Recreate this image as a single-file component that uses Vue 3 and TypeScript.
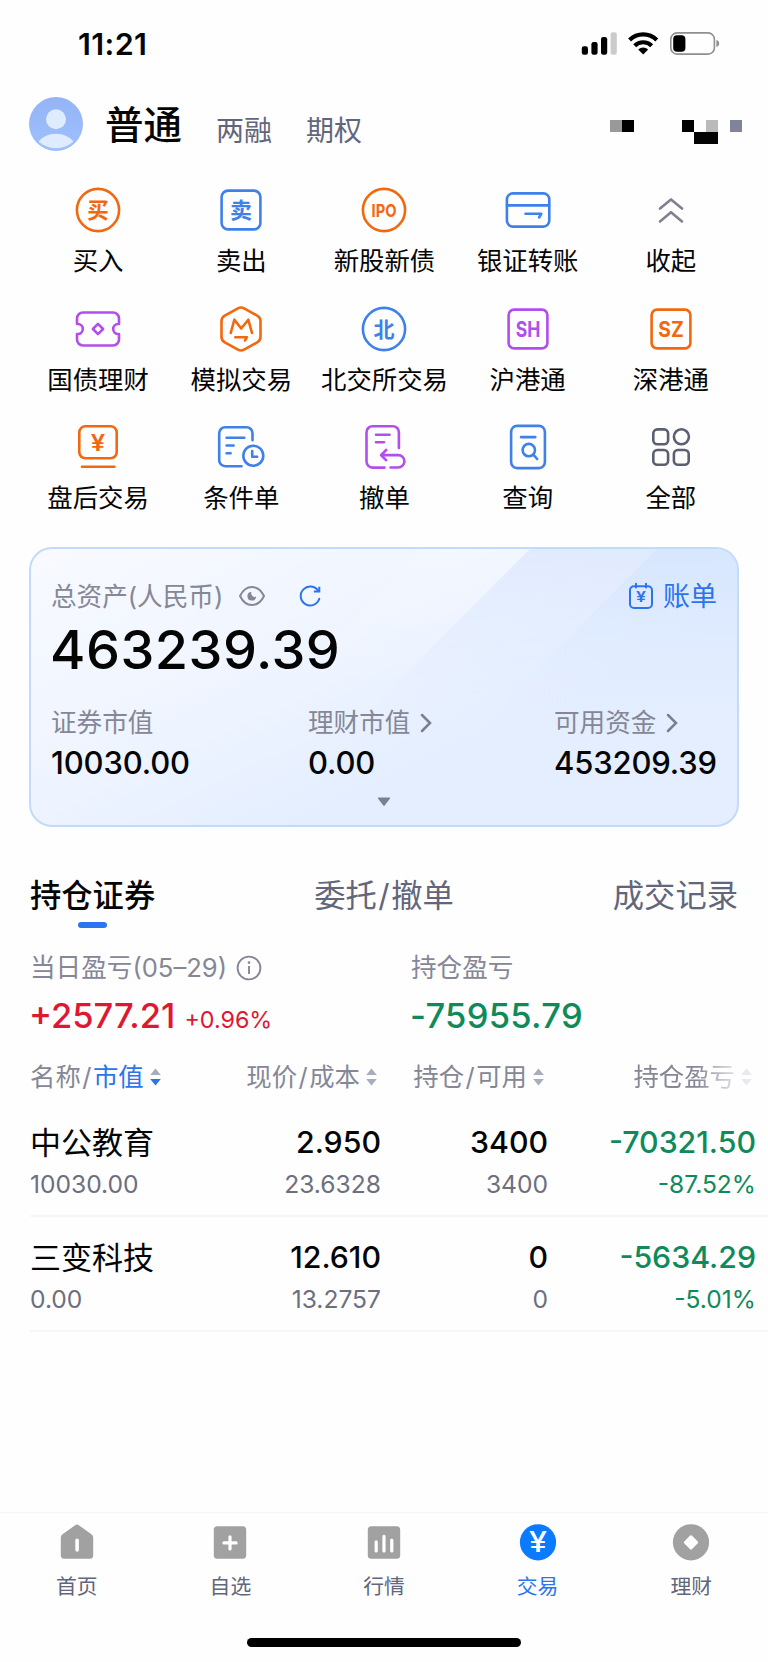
<script setup lang="ts">
type Tone = 'orange' | 'blue' | 'purple' | 'gray' | 'dark'

interface Entry {
  id: string
  label: string
  tone: Tone
}

interface Holding {
  name: string
  value: string
  price: string
  cost: string
  held: string
  available: string
  profit: string
  rate: string
}

const entries: Entry[] = [
  { id: 'buy', label: '买入', tone: 'orange' },
  { id: 'sell', label: '卖出', tone: 'blue' },
  { id: 'ipo', label: '新股新债', tone: 'orange' },
  { id: 'bank', label: '银证转账', tone: 'blue' },
  { id: 'fold', label: '收起', tone: 'gray' },
  { id: 'bond', label: '国债理财', tone: 'purple' },
  { id: 'mock', label: '模拟交易', tone: 'orange' },
  { id: 'north', label: '北交所交易', tone: 'blue' },
  { id: 'sh', label: '沪港通', tone: 'purple' },
  { id: 'sz', label: '深港通', tone: 'orange' },
  { id: 'after', label: '盘后交易', tone: 'orange' },
  { id: 'condition', label: '条件单', tone: 'blue' },
  { id: 'cancel', label: '撤单', tone: 'purple' },
  { id: 'query', label: '查询', tone: 'blue' },
  { id: 'all', label: '全部', tone: 'dark' },
]

const holdings: Holding[] = [
  { name: '中公教育', value: '10030.00', price: '2.950', cost: '23.6328', held: '3400', available: '3400', profit: '-70321.50', rate: '-87.52%' },
  { name: '三变科技', value: '0.00', price: '12.610', cost: '13.2757', held: '0', available: '0', profit: '-5634.29', rate: '-5.01%' },
]

const navItems = [
  { id: 'home', label: '首页' },
  { id: 'watch', label: '自选' },
  { id: 'market', label: '行情' },
  { id: 'trade', label: '交易' },
  { id: 'wealth', label: '理财' },
]
</script>

<template>
  <div class="screen">
    <div class="status">
      <span class="clock">11:21</span>
      <svg class="status-icons" width="140" height="26" viewBox="0 0 140 26">
        <rect x="1.8" y="16.2" width="6.2" height="8.6" rx="2.2" />
        <rect x="11.4" y="12" width="6.2" height="12.8" rx="2.2" />
        <rect x="21" y="7" width="6.2" height="17.8" rx="2.2" />
        <rect x="30.6" y="2.2" width="6.2" height="22.6" rx="2.2" fill="#cbcbcb" />
        <g fill="none" stroke="#000" stroke-width="4.2">
          <path d="M49.6 9.9a19.4 19.4 0 0 1 27.2 0" />
          <path d="M54.7 15.7a12.2 12.2 0 0 1 17 0" />
        </g>
        <path d="M63.2 24.6l-5-5.1a7.2 7.2 0 0 1 10 0z" />
        <rect x="90.8" y="2.9" width="43.6" height="21.2" rx="6.4" fill="none" stroke="#8f8f8f" stroke-width="1.6" />
        <rect x="93.2" y="5.3" width="12.2" height="16.4" rx="3.8" />
        <path d="M136.4 10v7a3.6 3.6 0 0 0 0-7z" fill="#8f8f8f" />
      </svg>
    </div>

    <header class="top">
      <svg class="avatar" width="54" height="54" viewBox="0 0 54 54">
        <defs>
          <linearGradient id="avatar-fill" x1="0" y1="0" x2="0" y2="1">
            <stop offset="0" stop-color="#94b4f6" />
            <stop offset="1" stop-color="#9fc0fd" />
          </linearGradient>
        </defs>
        <circle cx="27" cy="27" r="27" fill="url(#avatar-fill)" />
        <circle cx="27" cy="22.3" r="10" fill="#dfebff" />
        <path d="M9.6 44.6C13.6 39.8 20 36.8 27 36.8s13.4 3 17.4 7.8C39.5 49 33.5 51.2 27 51.2S14.5 49 9.6 44.6z" fill="#dfebff" />
      </svg>
      <span class="account active">普通</span>
      <span class="account second">两融</span>
      <span class="account third">期权</span>
      <svg class="mosaic" width="132" height="24" viewBox="0 0 132 24" shape-rendering="crispEdges">
        <rect x="0" y="0" width="12" height="12" fill="#999" />
        <rect x="12" y="0" width="12" height="12" />
        <rect x="72" y="0" width="12" height="12" />
        <rect x="96" y="0" width="12" height="12" fill="#bababa" />
        <rect x="120" y="0" width="12" height="12" fill="#80839a" />
        <rect x="84" y="12" width="24" height="12" fill="#040404" />
      </svg>
    </header>

    <nav class="entries">
      <div v-for="e in entries" :key="e.id" class="entry">
        <svg class="glyph" :class="e.tone" width="48" height="48" viewBox="0 0 48 48">
          <template v-if="e.id === 'buy'">
            <circle cx="24" cy="24" r="21.1" />
            <text x="24" y="32" font-size="21.5">买</text>
          </template>
          <template v-else-if="e.id === 'sell'">
            <rect x="4.6" y="4.6" width="38.8" height="38.8" rx="6.5" />
            <text x="24" y="32.2" font-size="22">卖</text>
          </template>
          <template v-else-if="e.id === 'ipo'">
            <circle cx="24" cy="24" r="21.1" />
            <text class="latin" x="11.6" y="30.6" font-size="18" textLength="25" lengthAdjust="spacingAndGlyphs">IPO</text>
          </template>
          <template v-else-if="e.id === 'bank'">
            <rect x="2.9" y="7.4" width="42.4" height="33.2" rx="6" />
            <path d="M3 19.4H45M21.5 27.7H37.3L35.2 31.4" />
          </template>
          <template v-else-if="e.id === 'fold'">
            <path d="M13 22.6L24 13.4L35 22.6M13 35.4L24 26.2L35 35.4" />
          </template>
          <template v-else-if="e.id === 'bond'">
            <path d="M9 7.5H39a6 6 0 0 1 6 6V19h-.8a5 5 0 0 0 0 10h.8V34.5a6 6 0 0 1-6 6H9a6 6 0 0 1-6-6V29h.8a5 5 0 0 0 0-10H3V13.5a6 6 0 0 1 6-6z" />
            <path d="M24 18.9L29.1 24L24 29.1L18.9 24z" />
          </template>
          <template v-else-if="e.id === 'mock'">
            <path d="M20.9 3.4Q24 1.7 27.1 3.4L40.2 10.6Q43.5 12.5 43.5 16V32Q43.5 35.5 40.2 37.4L27.1 44.6Q24 46.3 20.9 44.6L7.8 37.4Q4.5 35.5 4.5 32V16Q4.5 12.5 7.8 10.6z" />
            <path d="M13.7 28L17.4 14.7L24.2 23.5L31.3 14.7L35 28M18.3 32.2H30L28 35.5" />
          </template>
          <template v-else-if="e.id === 'north'">
            <circle cx="24" cy="24" r="21.1" />
            <text x="24" y="31.5" font-size="21">北</text>
          </template>
          <template v-else-if="e.id === 'sh'">
            <rect x="4.6" y="4.6" width="38.8" height="38.8" rx="5.5" />
            <text class="latin" x="11.8" y="31.5" font-size="21" textLength="24.6" lengthAdjust="spacingAndGlyphs">SH</text>
          </template>
          <template v-else-if="e.id === 'sz'">
            <rect x="4.6" y="4.6" width="38.8" height="38.8" rx="5.5" />
            <text class="latin" x="11.3" y="31.5" font-size="21" textLength="25.4" lengthAdjust="spacingAndGlyphs">SZ</text>
          </template>
          <template v-else-if="e.id === 'after'">
            <rect x="5.3" y="3.3" width="37.4" height="32" rx="6" />
            <path d="M8 43.7H40.4" />
            <text class="latin yuan" x="16.8" y="27.5" font-size="23" textLength="14.4" lengthAdjust="spacingAndGlyphs">¥</text>
          </template>
          <template v-else-if="e.id === 'condition'">
            <path d="M24.5 43.2H8.2a6 6 0 0 1-6-6V10.2a6 6 0 0 1 6-6H29.5a6 6 0 0 1 6 6V17.3" />
            <path d="M9.6 14.7H27.3M9.6 22.5h7M9.6 30.3h4M35.2 28v5.8h5" />
            <circle cx="36.3" cy="32.7" r="10" />
          </template>
          <template v-else-if="e.id === 'cancel'">
            <path d="M24.5 44.6H12.5a6 6 0 0 1-6-6V9.2a6 6 0 0 1 6-6H32.9a6 6 0 0 1 6 6V25" />
            <path d="M16 11.7H29.5M16 19.3H24M26.2 27L21 32.1L26.2 37.2M21.3 32.1H38.2a6.2 6.2 0 0 1 0 12.4H30.5" />
          </template>
          <template v-else-if="e.id === 'query'">
            <rect x="7.1" y="2.9" width="33.8" height="42.2" rx="6" />
            <path d="M17 14.1H31.3M29.3 31.6L33.2 36" />
            <circle cx="24.8" cy="27.1" r="6.2" />
          </template>
          <template v-else>
            <rect x="6.3" y="6.4" width="14.8" height="14.8" rx="4" />
            <circle cx="34.4" cy="13.8" r="7.5" />
            <rect x="6.3" y="27" width="14.8" height="14.8" rx="4" />
            <rect x="26.9" y="27" width="14.8" height="14.8" rx="4" />
          </template>
        </svg>
        <span class="entry-label">{{ e.label }}</span>
      </div>
    </nav>

    <section class="card">
      <svg class="card-bands" width="710" height="280" viewBox="0 0 710 280">
        <defs>
          <linearGradient id="band-a" x1="0" y1="0" x2="0" y2="1">
            <stop offset="0" stop-color="#fff" stop-opacity=".2" />
            <stop offset="1" stop-color="#fff" stop-opacity="0" />
          </linearGradient>
          <linearGradient id="band-b" x1="0" y1="0" x2="0" y2="1">
            <stop offset="0" stop-color="#dde8fd" stop-opacity=".8" />
            <stop offset="1" stop-color="#e0ebff" stop-opacity="0" />
          </linearGradient>
          <linearGradient id="band-c" x1="0" y1="0" x2="0" y2="1">
            <stop offset="0" stop-color="#d2e5fe" stop-opacity=".7" />
            <stop offset="1" stop-color="#e0ebff" stop-opacity="0" />
          </linearGradient>
        </defs>
        <path d="M395 0H503L353 150H245z" fill="url(#band-a)" />
        <path d="M503 0H710V170H333z" fill="url(#band-b)" />
        <path d="M630 0H710V180H450z" fill="url(#band-c)" />
      </svg>
      <div class="asset-head">
        <span class="muted">总资产(人民币)</span>
        <svg class="eye" width="28" height="22" viewBox="0 0 28 22" fill="none">
          <path d="M2 11C4.8 5.2 9.2 2 14 2s9.2 3.2 12 9c-2.8 5.8-7.2 9-12 9S4.8 16.8 2 11z" stroke="#858796" stroke-width="2" stroke-linejoin="round" />
          <path d="M13.5 6.7a4.4 4.4 0 1 0 4.7 4.9a3.7 3.7 0 0 1-4.7-4.9z" fill="#858796" />
        </svg>
        <svg class="refresh" width="24" height="24" viewBox="0 0 24 24" fill="none" stroke="#2b74ee" stroke-width="2">
          <path d="M21.3 14.8A9.5 9.5 0 1 1 20.3 7" stroke-linecap="round" />
          <path d="M21.3 2.8V7.6H15.8" />
        </svg>
        <span class="bill">
          <svg width="26" height="28" viewBox="0 0 26 28" fill="none" stroke="#2b74ee" stroke-width="2" stroke-linecap="round">
            <rect x="2" y="4.3" width="22" height="21.7" rx="4" />
            <path d="M8 1.8V5.5M18 1.8V5.5" />
            <text class="yen" x="8" y="20.3" textLength="10" lengthAdjust="spacingAndGlyphs">¥</text>
          </svg>
          账单
        </span>
      </div>
      <div class="total">463239.39</div>
      <div class="asset-cols">
        <div class="asset-col first">
          <span class="muted">证券市值</span>
          <b>10030.00</b>
        </div>
        <div class="asset-col middle">
          <span class="muted">理财市值<svg class="chev" width="12" height="20" viewBox="0 0 12 20"><path d="M2 2L10 10L2 18" /></svg></span>
          <b>0.00</b>
        </div>
        <div class="asset-col">
          <span class="muted">可用资金<svg class="chev" width="12" height="20" viewBox="0 0 12 20"><path d="M2 2L10 10L2 18" /></svg></span>
          <b>453209.39</b>
        </div>
      </div>
      <svg class="expand" width="14" height="10" viewBox="0 0 14 10"><path d="M1.3 .6H12.7Q13.5 .8 13 1.6L7.7 8.6Q7 9.3 6.3 8.6L1 1.6Q.5 .8 1.3 .6z" fill="#7c7f8f" /></svg>
    </section>

    <div class="tabs">
      <span class="tab on">持仓证券</span>
      <span class="tab">委托<i class="slash">/</i>撤单</span>
      <span class="tab">成交记录</span>
    </div>

    <section class="summary">
      <div class="sum-col">
        <span class="muted day">当日盈亏(05–29)<svg width="26" height="26" viewBox="0 0 26 26" fill="none" stroke="#858796" stroke-width="1.9"><circle cx="13" cy="13" r="11.4" /><path d="M13 11V19" /><circle cx="13" cy="7.6" r="1.3" fill="#858796" stroke="none" /></svg></span>
        <div class="sum-value up">+2577.21<small>+0.96%</small></div>
      </div>
      <div class="sum-col">
        <span class="muted">持仓盈亏</span>
        <div class="sum-value down total-loss">-75955.79</div>
      </div>
    </section>

    <div class="table">
      <div class="row head">
        <span class="cell left">名称<i class="slash">/</i><i class="picked">市值</i><svg class="sort picked-sort" width="11" height="18" viewBox="0 0 11 18"><path class="up-arrow" d="M5.5 .5L10.8 7H.2z" /><path class="down-arrow" d="M5.5 17.5L10.8 11H.2z" /></svg></span>
        <span class="cell">现价<i class="slash">/</i>成本<svg class="sort" width="11" height="18" viewBox="0 0 11 18"><path class="up-arrow" d="M5.5 .5L10.8 7H.2z" /><path class="down-arrow" d="M5.5 17.5L10.8 11H.2z" /></svg></span>
        <span class="cell">持仓<i class="slash">/</i>可用<svg class="sort" width="11" height="18" viewBox="0 0 11 18"><path class="up-arrow" d="M5.5 .5L10.8 7H.2z" /><path class="down-arrow" d="M5.5 17.5L10.8 11H.2z" /></svg></span>
        <span class="cell faded">持仓盈亏<svg class="sort" width="11" height="18" viewBox="0 0 11 18"><path class="up-arrow" d="M5.5 .5L10.8 7H.2z" /><path class="down-arrow" d="M5.5 17.5L10.8 11H.2z" /></svg></span>
      </div>
      <div v-for="h in holdings" :key="h.name" class="row holding">
        <div class="pair left"><span class="name">{{ h.name }}</span><span class="sub">{{ h.value }}</span></div>
        <div class="pair"><span class="main">{{ h.price }}</span><span class="sub">{{ h.cost }}</span></div>
        <div class="pair"><span class="main">{{ h.held }}</span><span class="sub">{{ h.available }}</span></div>
        <div class="pair down"><span class="main">{{ h.profit }}</span><span class="sub">{{ h.rate }}</span></div>
      </div>
    </div>

    <footer class="bottom">
      <div class="nav">
        <div v-for="n in navItems" :key="n.id" class="nav-item" :class="{ current: n.id === 'trade' }">
          <svg width="38" height="38" viewBox="0 0 38 38" fill="#a1a1a1">
            <template v-if="n.id === 'home'">
              <path d="M17.5 2Q19 .8 20.5 2L33.5 11.2Q35.2 12.5 35.2 14.5V32.2a3.5 3.5 0 0 1-3.5 3.5H6.3a3.5 3.5 0 0 1-3.5-3.5V14.5Q2.8 12.5 4.5 11.2z" />
              <rect x="17.3" y="15.5" width="3.6" height="13.3" rx="1.8" fill="#fff" />
            </template>
            <template v-else-if="n.id === 'watch'">
              <rect x="2.8" y="3.3" width="32.4" height="32.4" rx="3.5" />
              <path d="M19 13.8V26M12.9 19.9H25.1" stroke="#fff" stroke-width="3.2" stroke-linecap="round" />
            </template>
            <template v-else-if="n.id === 'market'">
              <rect x="2.8" y="3.3" width="32.4" height="32.4" rx="3.5" />
              <path d="M11.2 18.8V28M19 13.3V28M26.8 17V28" stroke="#fff" stroke-width="3.2" stroke-linecap="round" />
            </template>
            <template v-else-if="n.id === 'trade'">
              <circle cx="19" cy="19.3" r="18.1" fill="#0a7aff" />
              <text class="nav-yen" x="10" y="29.3" textLength="18" lengthAdjust="spacingAndGlyphs">¥</text>
            </template>
            <template v-else>
              <circle cx="19" cy="19.3" r="18.1" />
              <path d="M19 13.5L24.9 19.4L19 25.3L13.1 19.4z" fill="#fff" stroke="#fff" stroke-width="2.5" stroke-linejoin="round" />
            </template>
          </svg>
          <span>{{ n.label }}</span>
        </div>
      </div>
      <div class="home-bar"></div>
    </footer>
  </div>
</template>

<style>
body {
  margin: 0;
  background: #fefefe;
}
</style>

<style scoped>
.screen {
  width: 768px;
  height: 1662px;
  overflow: hidden;
  display: flex;
  flex-direction: column;
  background: #fefefe;
  color: #050505;
  font-family: Inter, "Noto Sans CJK SC", sans-serif;
  font-size: 25.4px;
}

svg {
  display: block;
  flex: none;
}

.status {
  height: 88px;
  flex: none;
  display: flex;
  justify-content: space-between;
  padding: 0 48px 0 78px;
  box-sizing: border-box;
}

.clock {
  line-height: 88px;
  font-size: 30.5px;
  font-weight: 600;
  letter-spacing: .4px;
}

.status-icons {
  margin-top: 30px;
}

.top {
  height: 72px;
  flex: none;
  display: flex;
  align-items: center;
  padding-left: 29px;
}

.account {
  white-space: nowrap;
  line-height: 40px;
}

.account.active {
  margin: 2px 0 0 22px;
  font-size: 38.5px;
  font-weight: 500;
}

.account.second,
.account.third {
  margin: 14px 0 0 34px;
  font-size: 28px;
  color: #62667a;
}

.mosaic {
  margin: 15px 26px 0 auto;
}

.entries {
  height: 387px;
  flex: none;
  box-sizing: border-box;
  display: grid;
  grid-template-columns: repeat(5, 143.2px);
  grid-auto-rows: 118.5px;
  padding: 26px 0 0 26.5px;
}

.entry {
  display: flex;
  flex-direction: column;
  align-items: center;
}

.entry-label {
  margin-top: 7px;
  line-height: 40px;
  white-space: nowrap;
}

.glyph {
  fill: none;
  stroke: currentColor;
  stroke-width: 2.6;
  stroke-linecap: round;
  stroke-linejoin: round;
}

.glyph text {
  fill: currentColor;
  stroke: none;
  font-weight: 700;
  text-anchor: middle;
}

.glyph text.latin {
  font-family: Inter, sans-serif;
  font-weight: 700;
  text-anchor: start;
}

.glyph text.yuan {
  font-weight: 600;
}

.orange { color: #f2680f; }
.blue { color: #3f80ea; }
.purple { color: #b14eed; }
.gray { color: #7f8191; }
.dark { color: #5b5f72; }

.card {
  position: relative;
  width: 710px;
  height: 280px;
  flex: none;
  margin-left: 29px;
  box-sizing: border-box;
  border: 2px solid #c2dafc;
  border-radius: 23px;
  overflow: hidden;
  background: linear-gradient(155deg, #f8faff 0%, #eef4ff 42%, #e4eeff 66%, #e4eeff 100%);
  padding: 25px 20px 0;
}

.card-bands {
  position: absolute;
  left: -2px;
  top: -2px;
}

.asset-head {
  position: relative;
  display: flex;
  align-items: center;
  height: 46px;
}

.muted {
  color: #858796;
  white-space: nowrap;
  font-size: 25.6px;
  line-height: 40px;
}

.asset-head .muted {
  margin-top: -1px;
}

.asset-head svg {
  margin-top: -2px;
}

.eye {
  margin-left: 15px;
}

.refresh {
  margin-left: 32px;
}

.bill {
  margin-left: auto;
  display: flex;
  align-items: center;
  gap: 9px;
  font-size: 27px;
  line-height: 40px;
  color: #2b74ee;
}

.yen {
  font-family: Inter, sans-serif;
  font-size: 15px;
  font-weight: 600;
  fill: #2b74ee;
  stroke: none;
}

.total {
  position: relative;
  height: 60px;
  line-height: 60px;
  font-size: 54px;
  font-weight: 500;
  letter-spacing: .5px;
  margin-left: -1px;
}

.asset-cols {
  position: relative;
  margin-top: 23px;
  display: flex;
}

.asset-col {
  display: flex;
  flex-direction: column;
}

.asset-col.first { width: 257px; }
.asset-col.middle { width: 246px; }

.asset-col .muted {
  display: flex;
  align-items: center;
  height: 40px;
}

.asset-col b {
  line-height: 40px;
  font-size: 31px;
  font-weight: 500;
  letter-spacing: -.15px;
}

.chev {
  margin-left: 10px;
  fill: none;
  stroke: #7c7f8f;
  stroke-width: 2.5;
  stroke-linecap: round;
}

.expand {
  position: relative;
  margin: 14px auto 0;
}

.tabs {
  height: 101px;
  flex: none;
  display: flex;
  justify-content: space-between;
  padding: 49px 30px 0 30px;
  box-sizing: border-box;
}

.tab {
  line-height: 40px;
  font-size: 31.3px;
  color: #62667a;
}

.slash {
  font-style: normal;
  margin: 0 1.5px;
}

.tab.on {
  color: #050505;
  font-weight: 500;
  display: flex;
  flex-direction: column;
  align-items: center;
}

.tab.on::after {
  content: "";
  width: 29px;
  height: 6px;
  margin-top: 6px;
  border-radius: 3px;
  background: #2f74ee;
}

.summary {
  height: 122px;
  flex: none;
  display: flex;
  padding: 20px 0 0 30px;
  box-sizing: border-box;
}

.sum-col {
  width: 381px;
  flex: none;
}

.sum-col .muted {
  display: flex;
  align-items: center;
  height: 40px;
}

.day svg {
  margin-left: 9px;
}

.sum-value {
  margin-top: 8px;
  margin-left: -1px;
  line-height: 40px;
  font-size: 34.5px;
  font-weight: 500;
}

.total-loss {
  letter-spacing: .3px;
}

.sum-value small {
  margin-left: 9px;
  font-size: 23.3px;
  font-weight: 400;
}

.up { color: #df1730; }
.down { color: #0f8a5a; }

.table {
  flex: 1;
}

.row {
  display: grid;
  grid-template-columns: 180px 171px 167px 208px;
  margin-left: 30px;
}

.head {
  height: 52px;
  color: #858796;
}

.cell {
  display: flex;
  align-items: center;
  justify-content: flex-end;
  height: 54px;
  line-height: 54px;
  padding-right: 4px;
}

.cell.left {
  justify-content: flex-start;
}

.cell .picked {
  font-style: normal;
  color: #2b74ee;
}

.sort {
  margin-left: 6px;
  fill: #a9acbe;
}

.picked-sort .down-arrow {
  fill: #2b74ee;
}

.faded {
  -webkit-mask-image: linear-gradient(90deg, #000 0, #000 148px, rgba(0, 0, 0, .25) 186px);
  mask-image: linear-gradient(90deg, #000 0, #000 148px, rgba(0, 0, 0, .25) 186px);
}

.holding {
  height: 115px;
  box-sizing: border-box;
  border-bottom: 2px solid #f6f6f8;
  padding-top: 19px;
}

.pair {
  display: flex;
  flex-direction: column;
  align-items: flex-end;
}

.pair.left {
  align-items: flex-start;
}

.name {
  font-size: 31px;
  line-height: 44px;
}

.main {
  font-size: 30.3px;
  line-height: 42px;
  font-weight: 500;
}

.sub {
  font-size: 24.6px;
  line-height: 40px;
  color: #6c6f80;
}

.pair .name + .sub {
  margin-top: -1px;
}

.main + .sub {
  margin-top: 1px;
}

.down .sub {
  color: #0f8a5a;
}

.bottom {
  height: 150px;
  flex: none;
  box-sizing: border-box;
  border-top: 1px solid #f6f6f6;
  display: flex;
  flex-direction: column;
  align-items: center;
}

.nav {
  width: 768px;
  height: 125px;
  display: grid;
  grid-template-columns: repeat(5, 1fr);
  padding-top: 10px;
  box-sizing: border-box;
}

.nav-item {
  display: flex;
  flex-direction: column;
  align-items: center;
  font-size: 20.8px;
  color: #62667a;
}

.nav-item span {
  margin-top: 10px;
  line-height: 32px;
}

.nav-item.current {
  color: #2b74ee;
}

.nav-yen {
  font-family: Inter, sans-serif;
  font-size: 28px;
  font-weight: 500;
  fill: #fff;
}

.home-bar {
  width: 274px;
  height: 9px;
  border-radius: 5px;
  background: #000;
}
</style>
